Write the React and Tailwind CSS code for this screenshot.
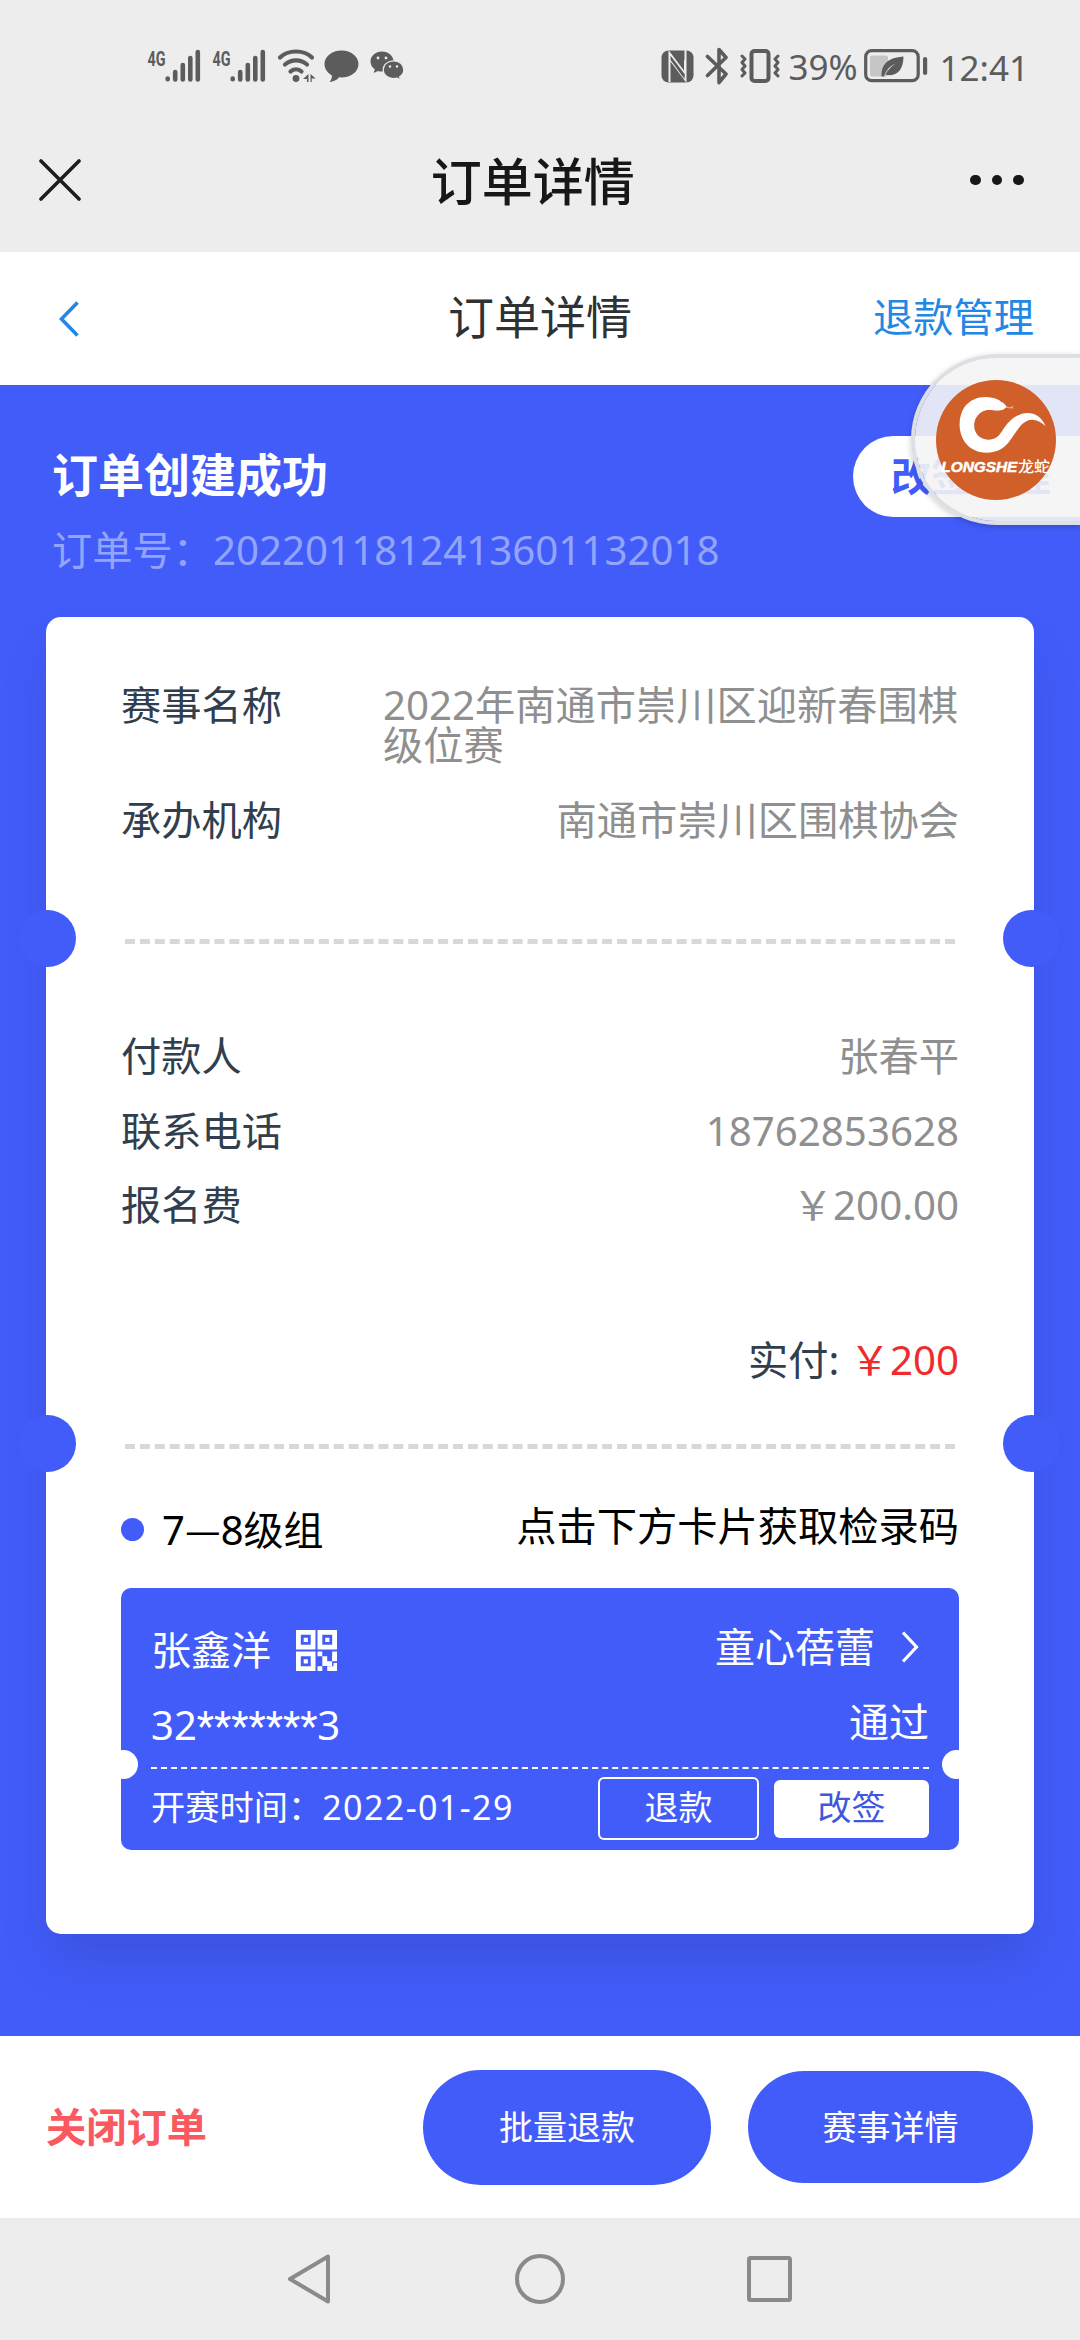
import React from 'react';

const infoRows = [
  { label: '付款人', value: '张春平' },
  { label: '联系电话', value: '18762853628' },
  { label: '报名费', value: '￥200.00' },
];

function Signal() {
  return (
    <svg className="w-[54px] h-[36px] overflow-visible" viewBox="0 0 54 36" fill="none" stroke="#5c5c5c" strokeWidth="4.6" strokeLinecap="round">
      <text x="0.5" y="17.5" fontSize="20" fontWeight="700" fill="#5c5c5c" stroke="none" fontFamily="Roboto, sans-serif" textLength="18" lengthAdjust="spacingAndGlyphs">4G</text>
      <path d="M20.7 30.5v.8M28.2 24v7.5M35.8 17v14.5M43.3 10v21.5M50.8 4v27.5" />
    </svg>
  );
}

function Wifi() {
  return (
    <svg className="w-[42px] h-[36px]" viewBox="0 0 42 36" fill="none" stroke="#5c5c5c" strokeWidth="4.2" strokeLinecap="round">
      <path d="M3 9.5C11 1.5 27 1.5 35 9.5M8 16.5C14 11 24 11 30 16.5M13.5 23.5C16.5 20.5 21.5 20.5 24.5 23.5" />
      <circle cx="19" cy="30.5" r="3.4" fill="#5c5c5c" stroke="none" />
      <path d="M31.5 26v8h-1.5v-3h-4zM33.5 26v8h1.2v-3.5h4z" fill="#5c5c5c" stroke="none" />
    </svg>
  );
}

function StatusBar() {
  return (
    <div className="flex items-center h-[132px] pl-[147px] pr-[51px] text-[#5c5c5c]">
      <div className="flex items-center gap-[11px]">
        <Signal />
        <Signal />
        <Wifi />
      </div>
      <svg className="w-[35px] h-[34px] ml-[5px]" viewBox="0 0 35 34" fill="#5c5c5c">
        <path d="M17.5 1.5C8 1.5.5 7.500.5 15c0 4.800 3 9 7.500 11.500 0 2.500-.8 4.500-2.500 6.500 4 0 7.500-2 9.500-4.700 11 .9 19.500-5 19.500-13.300C34.500 7.500 27 1.500 17.500 1.500z" />
      </svg>
      <svg className="w-[35px] h-[30px] ml-[11px]" viewBox="0 0 35 30" fill="#5c5c5c">
        <path d="M12 .5C5.500.5.5 5 .5 10.500c0 3.200 1.700 6 4.300 7.800L3.700 22l4.200-2c1.300.4 2.700.5 4.100.5 6.500 0 11.500-4.500 11.500-10S18.500.5 12 .5z" />
        <path d="M23.500 9.800c-5.700 0-10.300 4-10.300 8.900s4.600 8.900 10.300 8.900c1.200 0 2.400-.2 3.500-.5l3.600 2-1-3.300c2.500-1.600 4.200-4.200 4.200-7.100 0-4.900-4.600-8.900-10.300-8.900z" stroke="#ededed" strokeWidth="1.2" />
        <g fill="#ededed">
          <circle cx="8" cy="7" r="1.4" /><circle cx="16" cy="7" r="1.4" />
          <circle cx="20" cy="15.5" r="1.2" /><circle cx="27" cy="15.5" r="1.2" />
        </g>
      </svg>

      <div className="flex items-center ml-auto">
        <svg className="w-[33px] h-[33px]" viewBox="0 0 33 33">
          <rect x=".5" y=".5" width="32" height="32" rx="7" fill="#5c5c5c" />
          <path d="M8.500 32V3L24 23.500V10M24.500 0v30L9.500 10" fill="none" stroke="#ededed" strokeWidth="2" />
          <path d="M10 6.500L23.500 24v5L10 10.500z" fill="#5c5c5c" />
        </svg>
        <svg className="w-[24px] h-[38px] ml-[11px]" viewBox="0 0 24 38" fill="none" stroke="#5c5c5c" strokeWidth="3.6" strokeLinejoin="round" strokeLinecap="round">
          <path d="M2.500 9.500L21 27l-7 8.500V2.500l7 8L2.500 28.500" />
        </svg>
        <svg className="w-[40px] h-[34px] ml-[11px]" viewBox="0 0 40 34" fill="none" stroke="#5c5c5c" strokeWidth="3" strokeLinejoin="round" strokeLinecap="round">
          <rect x="11.5" y="2" width="17" height="30" rx="3" strokeWidth="4" />
          <path d="M2 7l3 3-3 3.500 3 3.500-3 3.500 3 3.500-3 3M38 7l-3 3 3 3.500-3 3.500 3 3.500-3 3.500 3 3" />
        </svg>
        <span className="ml-[8px] text-[35px] leading-none">39%</span>
        <svg className="w-[64px] h-[34px] ml-[6px]" viewBox="0 0 64 34">
          <rect x="1.7" y="1.7" width="52.5" height="30" rx="6" fill="none" stroke="#5c5c5c" strokeWidth="3.2" />
          <rect x="6" y="6.5" width="18" height="21" rx="2" fill="#c6c6c6" />
          <path d="M17.500 27.500C17 15 24 8.500 39.500 7.500 39.500 21 32.500 28.500 21.500 25.500c3-5.500 6-8.500 10-11-5.500 2.500-9.500 6.500-11.500 13z" fill="#5c5c5c" />
          <rect x="59" y="8" width="4.2" height="18" rx="2" fill="#5c5c5c" />
        </svg>
        <span className="ml-[12px] pt-[2px] text-[35px] leading-none">12:41</span>
      </div>
    </div>
  );
}

function TitleBar() {
  return (
    <div className="flex items-center justify-between h-[120px] pb-[24px] pl-[39px] pr-[56px] text-[#171717]">
      <svg className="w-[42px] h-[42px]" viewBox="0 0 42 42" stroke="#1d1d1d" strokeWidth="3.6" strokeLinecap="round">
        <path d="M2 2l38 38M40 2L2 40" />
      </svg>
      <h1 className="text-[51px] font-medium leading-none pt-[3px] pl-[14px]">订单详情</h1>
      <div className="flex gap-[11px]">
        <i className="size-[10.5px] rounded-full bg-[#171717]" />
        <i className="size-[10.5px] rounded-full bg-[#171717]" />
        <i className="size-[10.5px] rounded-full bg-[#171717]" />
      </div>
    </div>
  );
}

function PageNav() {
  return (
    <div className="grid grid-cols-3 items-center h-[133px] bg-white pl-[59px] pr-[46px]">
      <svg className="w-[20px] h-[36px]" viewBox="0 0 20 36" fill="none" stroke="#2288e4" strokeWidth="3.6">
        <path d="M18.500 1.500L2.500 18l16 16.500" />
      </svg>
      <h2 className="justify-self-center text-[46px] leading-none text-[#303133] -ml-[13px] -mt-[6px]">订单详情</h2>
      <a className="justify-self-end text-[40.25px] leading-none text-[#2288e4] -mt-[3px]">退款管理</a>
    </div>
  );
}

// dashed tear line with a round notch on both card edges
function TearLine() {
  return (
    <div className="relative mx-[4px]">
      <div className="border-t-[5px] border-dashed border-[#d8d8d8]" />
      <i className="absolute -left-[106px] -top-[29px] size-[57px] rounded-full bg-[#425cfa]" />
      <i className="absolute -right-[105px] -top-[29px] size-[57px] rounded-full bg-[#425cfa]" />
    </div>
  );
}

function QrIcon() {
  return (
    <svg className="w-[41px] h-[41px]" viewBox="0 0 41 41" fill="none" stroke="#fff" strokeWidth="4.8">
      <path d="M2.400 2.400h14.700v14.700H2.400zM23.900 2.400h14.700v14.700H23.900zM2.400 23.900h14.700v14.700H2.400z" />
      <path d="M7.700 7.700h4.200v4.200H7.700zM29.200 7.700h4.200v4.200h-4.200zM7.700 29.200h4.200v4.200H7.700z" fill="#fff" stroke="none" />
      <path d="M21.500 21.500h4.800v4.800h-4.800zM36.200 21.500H41v4.800h-4.800zM26.300 26.300h4.900v9.700h-4.900zM31.200 31.200h4.900v4.900h-4.900zM36 26.300h5v5h-5zM21.500 36.200h4.800V41h-4.800zM31.200 36.200H41V41h-9.800zM37.500 33H41v4h-3.500z" fill="#fff" stroke="none" />
    </svg>
  );
}

function PlayerTicket() {
  return (
    <div className="relative mt-[42px] h-[262px] rounded-[10px] bg-[#425cfa] px-[30px] pt-[42px] text-white text-[40px] leading-none">
      <div className="flex justify-between h-[40px]">
        <div className="flex items-center gap-[25px]">
          <span>张鑫洋</span>
          <QrIcon />
        </div>
        <div className="flex items-center pr-[10px] -mt-[6px]">
          <span>童心蓓蕾</span>
          <svg className="w-[18px] h-[32px] ml-[26px]" viewBox="0 0 18 32" fill="none" stroke="#fff" strokeWidth="3.2">
            <path d="M2 1.500L15.500 16 2 30.500" />
          </svg>
        </div>
      </div>
      <div className="flex justify-between mt-[35px] h-[40px]">
        <span>32<span className="font-['Roboto']">*******</span>3</span>
        <span className="-mt-[3px]">通过</span>
      </div>
      <div className="mt-[22px] border-t-2 border-dashed border-white" />
      <div className="flex items-center mt-[8px] h-[63px] text-[34px]">
        <span className="text-[34.25px] pb-[3px]">开赛时间：</span>
        <span className="tracking-[1.4px] pb-[3px]">2022-01-29</span>
        <button className="ml-auto w-[161px] h-[63px] pb-[3px] rounded-[6px] border-2 border-white">退款</button>
        <button className="ml-[15px] w-[155px] h-[58px] pb-[3px] rounded-[6px] bg-white text-[#3d57dd]">改签</button>
      </div>
      <i className="absolute -left-[12px] top-[162px] size-[29px] rounded-full bg-white" />
      <i className="absolute -right-[12px] top-[162px] size-[29px] rounded-full bg-white" />
    </div>
  );
}

function OrderCard() {
  return (
    <div className="mx-[46px] h-[1317px] rounded-[15px] bg-white px-[75px] pt-[68px] text-[40.25px] leading-[40px] text-[#303e4d] shadow-[0_30px_50px_rgba(0,0,0,0.1)]">
      <div className="flex justify-between">
        <span>赛事名称</span>
        <span className="w-[576px] text-[#8f8f8f]">2022年南通市崇川区迎新春围棋级位赛</span>
      </div>
      <div className="flex justify-between mt-[35px]">
        <span>承办机构</span>
        <span className="text-[#8f8f8f]">南通市崇川区围棋协会</span>
      </div>

      <div className="mt-[99px]"><TearLine /></div>

      <div className="flex flex-col gap-[34.5px] mt-[92px]">
        {infoRows.map((row) => (
          <div key={row.label} className="flex justify-between">
            <span>{row.label}</span>
            <span className="text-[#8f8f8f]">{row.value}</span>
          </div>
        ))}
      </div>
      <div className="mt-[115px] text-right">
        实付: <span className="text-[#ee2c2c]">￥200</span>
      </div>

      <div className="mt-[64px]"><TearLine /></div>

      <div className="flex justify-between mt-[57px] h-[40px] text-black">
        <div className="flex items-center gap-[18px] pt-[6px]">
          <i className="size-[23px] rounded-full bg-[#425cfa]" />
          <span className="text-[40px]">7<span className="font-['Noto_Sans_CJK_SC']">—</span>8级组</span>
        </div>
        <span>点击下方卡片获取检录码</span>
      </div>
      <PlayerTicket />
    </div>
  );
}

function FloatingLogo() {
  return (
    <div className="absolute right-0 top-[354px] w-[169px] h-[171px] rounded-l-full border-y-4 border-l-4 border-[#dcdfe4] bg-[#f4f4f4]/90 bg-clip-padding shadow-[0_2px_6px_rgba(0,0,0,0.2)] flex items-center pl-[21px]">
      <svg className="w-[120px] h-[120px] overflow-visible" viewBox="288 123 360 360">
        <circle cx="468" cy="303" r="180" fill="#d05f29" />
        <path d="M500 203C482 172 408 156 373 205C343 250 358 341 440 341C503 341 514 291 543 259C563 236 592 236 617 262C598 216 555 212 520 237C480 268 487 301 445 302C398 300 388 243 425 219C448 205 466 222 492 211Z" fill="#fff" />
        <path d="M498 204q12 7 22-2m-8 3q5 2 8 3" fill="none" stroke="#f3c9b0" strokeWidth="2.5" />
        <circle cx="484" cy="187" r="2.5" fill="#d05f29" />
        <text x="304" y="400" fontSize="44" fontWeight="700" fontStyle="italic" fill="#fff" stroke="#fff" strokeWidth="1.5" fontFamily="'Liberation Sans', sans-serif" textLength="228" lengthAdjust="spacingAndGlyphs">LONGSHE</text>
        <text x="534" y="399" fontSize="46" fill="#fff" fontWeight="500" fontFamily="'Noto Sans CJK SC', sans-serif" textLength="96" lengthAdjust="spacingAndGlyphs">龙蛇</text>
      </svg>
    </div>
  );
}

function SystemNav() {
  return (
    <div className="flex items-center justify-center h-[122px]">
      <svg className="w-[506px] h-[52px]" viewBox="0 0 506 52" fill="none" stroke="#8a8a8a" strokeWidth="4" strokeLinejoin="round">
        <path d="M41 3.500v45L3 26z" />
        <circle cx="253" cy="26" r="23" />
        <rect x="462" y="5" width="41" height="42" rx="1.5" />
      </svg>
    </div>
  );
}

export default function App() {
  return (
    <div className="relative w-[1080px] h-[2340px] overflow-hidden bg-[#ededed] font-['Noto_Sans','Noto_Sans_CJK_SC',sans-serif]">
      <StatusBar />
      <TitleBar />
      <PageNav />

      <main className="h-[1651px] bg-[#425cfa]">
        <div className="flex justify-between h-[232px] pl-[52px] text-white leading-none">
          <div className="pt-[66px]">
            <p className="text-[46px] font-bold leading-none">订单创建成功</p>
            <p className="mt-[33px] text-[40.25px] leading-[40px] text-[#93a5fb]">订单号：2022011812413601132018</p>
          </div>
          <button className="mt-[51px] w-[227px] h-[81px] rounded-l-full bg-white pl-[38px] pb-[2px] text-left text-[40px] font-bold text-[#425cfa] whitespace-nowrap">改签管理</button>
        </div>
        <OrderCard />
      </main>

      <footer className="flex items-center h-[182px] bg-white pl-[46px] pr-[47px]">
        <span className="text-[40.25px] font-bold leading-none text-[#f9595f]">关闭订单</span>
        <button className="ml-auto w-[288px] h-[115px] rounded-full bg-[#425cfa] text-[34px] leading-none text-white">批量退款</button>
        <button className="ml-[37px] w-[285px] h-[112px] rounded-full bg-[#425cfa] text-[34px] leading-none text-white">赛事详情</button>
      </footer>
      <SystemNav />
      <FloatingLogo />
    </div>
  );
}
